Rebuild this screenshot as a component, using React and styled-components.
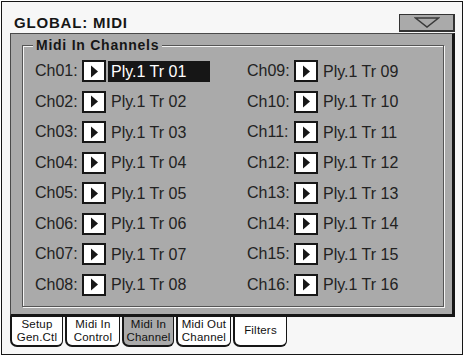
import styled, { createGlobalStyle } from "styled-components";

const GlobalStyle = createGlobalStyle`
  html, body {
    margin: 0;
    background: #ffffff;
  }
  * {
    box-sizing: border-box;
  }
`;

const GRAY = "#aaaaaa";
const INK = "#161616";

const Screen = styled.div`
  width: 462px;
  height: 354px;
  margin: 1px 0 0 1px;
  border: 1px solid ${INK};
  background: #f7f7f7;
  display: flex;
  flex-direction: column;
  font-family: "Liberation Sans", Arial, sans-serif;
  color: ${INK};
`;

const Header = styled.header`
  height: 31px;
  display: flex;
  align-items: flex-end;
  justify-content: space-between;
  padding: 0 7px 1px 12px;
`;

const Title = styled.h1`
  margin: 0;
  font-size: 15px;
  font-weight: 700;
  letter-spacing: 0.8px;
  line-height: 18px;
`;

const MenuButton = styled.button`
  width: 56px;
  height: 18px;
  padding: 0;
  background: ${GRAY};
  border: 1px solid #333;
  border-right-width: 2px;
  border-bottom-width: 2px;
  display: flex;
  align-items: center;
  justify-content: center;
`;

const Panel = styled.section`
  margin: 0 7px 0 8px;
  height: 284px;
  background: ${GRAY};
  border-top: 1px solid #4a4a4a;
  border-left: 1px solid #4a4a4a;
  border-right: 3px solid ${INK};
  border-bottom: 3px solid ${INK};
  padding: 11px 8px 7px 11px;
`;

const GroupBox = styled.div`
  position: relative;
  height: 262px;
  border: 1px solid #555;
  box-shadow: 1px 1px 0 #f4f4f4, inset 1px 1px 0 #f4f4f4;
  padding: 10px 0 0 12px;
`;

const Legend = styled.span`
  position: absolute;
  top: -9px;
  left: 10px;
  padding: 0 3px;
  background: ${GRAY};
  font-size: 14px;
  font-weight: 700;
  letter-spacing: 0.75px;
  line-height: 16px;
`;

const Channels = styled.div`
  display: grid;
  grid-template-columns: 212px 1fr;
  grid-template-rows: repeat(8, 30.5px);
  grid-auto-flow: column;
  align-items: center;
`;

const Row = styled.div`
  display: flex;
  align-items: center;
  font-size: 16px;
`;

const Label = styled.span`
  width: 47px;
  color: #222;
`;

const ArrowBox = styled.span`
  width: 24px;
  height: 22px;
  background: #fff;
  border: 2px solid ${INK};
  display: flex;
  align-items: center;
  justify-content: center;
`;

const Value = styled.span`
  margin-left: 2px;
  width: 102px;
  height: 21px;
  line-height: 21px;
  padding: 0 3px;
  background: ${({ selected }) => (selected ? INK : "transparent")};
  color: ${({ selected }) => (selected ? "#fff" : "#222")};
  white-space: nowrap;
`;

const TabBar = styled.nav`
  display: flex;
  gap: 2px;
  margin-left: 8px;
`;

const Tab = styled.div`
  width: ${({ w }) => w}px;
  height: 30px;
  background: ${({ active }) => (active ? GRAY : "#fff")};
  border: 1px solid ${INK};
  border-top: none;
  border-left-width: 2px;
  border-bottom-width: 2px;
  border-radius: 0 0 6px 7px;
  display: flex;
  align-items: center;
  justify-content: center;
  padding-bottom: 1px;
  text-align: center;
  font-size: 11.5px;
  line-height: 13px;
  letter-spacing: 0.2px;
  white-space: nowrap;
  color: #111;
`;

const Triangle = () => (
  <svg width="9" height="13" viewBox="0 0 9 13">
    <polygon points="1,0.5 8,6.5 1,12.5" fill={INK} />
  </svg>
);

const DownOutline = () => (
  <svg width="26" height="11" viewBox="0 0 26 11">
    <polygon points="1.5,1 24.5,1 13,10" fill="none" stroke="#3a3a3a" strokeWidth="1.5" />
  </svg>
);

const pad = (n) => String(n).padStart(2, "0");
const channels = Array.from({ length: 16 }, (_, i) => i + 1);

const tabs = [
  { w: 53, lines: ["Setup", "Gen.Ctl"] },
  { w: 55, lines: ["Midi In", "Control"] },
  { w: 52, lines: ["Midi In", "Channel"], active: true },
  { w: 55, lines: ["Midi Out", "Channel"] },
  { w: 54, lines: ["Filters"] },
];

export default function App() {
  return (
    <>
      <GlobalStyle />
      <Screen>
        <Header>
          <Title>GLOBAL: MIDI</Title>
          <MenuButton>
            <DownOutline />
          </MenuButton>
        </Header>
        <Panel>
          <GroupBox>
            <Legend>Midi In Channels</Legend>
            <Channels>
              {channels.map((n) => (
                <Row key={n}>
                  <Label>Ch{pad(n)}:</Label>
                  <ArrowBox>
                    <Triangle />
                  </ArrowBox>
                  <Value selected={n === 1}>Ply.1 Tr {pad(n)}</Value>
                </Row>
              ))}
            </Channels>
          </GroupBox>
        </Panel>
        <TabBar>
          {tabs.map((t) => (
            <Tab key={t.lines.join()} w={t.w} active={t.active}>
              <div>
                {t.lines.map((l) => (
                  <div key={l}>{l}</div>
                ))}
              </div>
            </Tab>
          ))}
        </TabBar>
      </Screen>
    </>
  );
}
